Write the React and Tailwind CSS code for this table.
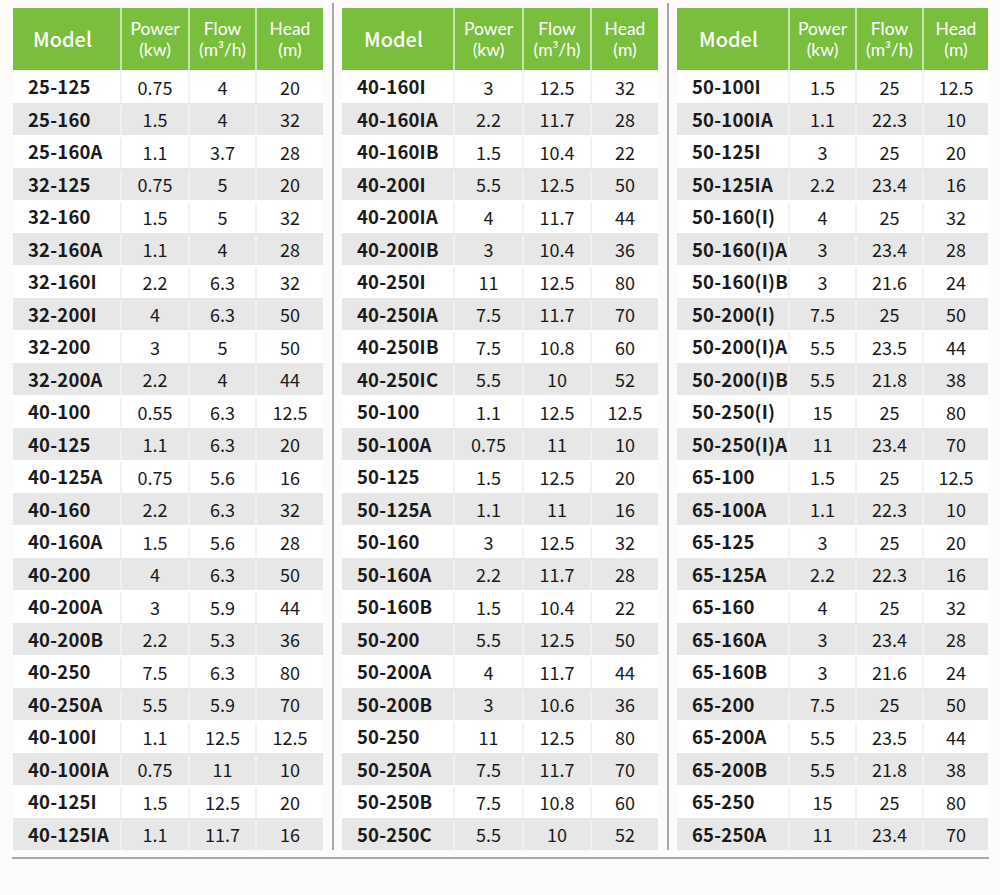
import React from "react";

const t1 = [
  ["25-125", "0.75", "4", "20"],
  ["25-160", "1.5", "4", "32"],
  ["25-160A", "1.1", "3.7", "28"],
  ["32-125", "0.75", "5", "20"],
  ["32-160", "1.5", "5", "32"],
  ["32-160A", "1.1", "4", "28"],
  ["32-160I", "2.2", "6.3", "32"],
  ["32-200I", "4", "6.3", "50"],
  ["32-200", "3", "5", "50"],
  ["32-200A", "2.2", "4", "44"],
  ["40-100", "0.55", "6.3", "12.5"],
  ["40-125", "1.1", "6.3", "20"],
  ["40-125A", "0.75", "5.6", "16"],
  ["40-160", "2.2", "6.3", "32"],
  ["40-160A", "1.5", "5.6", "28"],
  ["40-200", "4", "6.3", "50"],
  ["40-200A", "3", "5.9", "44"],
  ["40-200B", "2.2", "5.3", "36"],
  ["40-250", "7.5", "6.3", "80"],
  ["40-250A", "5.5", "5.9", "70"],
  ["40-100I", "1.1", "12.5", "12.5"],
  ["40-100IA", "0.75", "11", "10"],
  ["40-125I", "1.5", "12.5", "20"],
  ["40-125IA", "1.1", "11.7", "16"],
];

const t2 = [
  ["40-160I", "3", "12.5", "32"],
  ["40-160IA", "2.2", "11.7", "28"],
  ["40-160IB", "1.5", "10.4", "22"],
  ["40-200I", "5.5", "12.5", "50"],
  ["40-200IA", "4", "11.7", "44"],
  ["40-200IB", "3", "10.4", "36"],
  ["40-250I", "11", "12.5", "80"],
  ["40-250IA", "7.5", "11.7", "70"],
  ["40-250IB", "7.5", "10.8", "60"],
  ["40-250IC", "5.5", "10", "52"],
  ["50-100", "1.1", "12.5", "12.5"],
  ["50-100A", "0.75", "11", "10"],
  ["50-125", "1.5", "12.5", "20"],
  ["50-125A", "1.1", "11", "16"],
  ["50-160", "3", "12.5", "32"],
  ["50-160A", "2.2", "11.7", "28"],
  ["50-160B", "1.5", "10.4", "22"],
  ["50-200", "5.5", "12.5", "50"],
  ["50-200A", "4", "11.7", "44"],
  ["50-200B", "3", "10.6", "36"],
  ["50-250", "11", "12.5", "80"],
  ["50-250A", "7.5", "11.7", "70"],
  ["50-250B", "7.5", "10.8", "60"],
  ["50-250C", "5.5", "10", "52"],
];

const t3 = [
  ["50-100I", "1.5", "25", "12.5"],
  ["50-100IA", "1.1", "22.3", "10"],
  ["50-125I", "3", "25", "20"],
  ["50-125IA", "2.2", "23.4", "16"],
  ["50-160(I)", "4", "25", "32"],
  ["50-160(I)A", "3", "23.4", "28"],
  ["50-160(I)B", "3", "21.6", "24"],
  ["50-200(I)", "7.5", "25", "50"],
  ["50-200(I)A", "5.5", "23.5", "44"],
  ["50-200(I)B", "5.5", "21.8", "38"],
  ["50-250(I)", "15", "25", "80"],
  ["50-250(I)A", "11", "23.4", "70"],
  ["65-100", "1.5", "25", "12.5"],
  ["65-100A", "1.1", "22.3", "10"],
  ["65-125", "3", "25", "20"],
  ["65-125A", "2.2", "22.3", "16"],
  ["65-160", "4", "25", "32"],
  ["65-160A", "3", "23.4", "28"],
  ["65-160B", "3", "21.6", "24"],
  ["65-200", "7.5", "25", "50"],
  ["65-200A", "5.5", "23.5", "44"],
  ["65-200B", "5.5", "21.8", "38"],
  ["65-250", "15", "25", "80"],
  ["65-250A", "11", "23.4", "70"],
];

const headFont = { fontFamily: 'Lato, "Noto Sans", sans-serif' };

function HeadCell({ w, top, bottom, last }) {
  return (
    <div
      className={`${w} flex items-center justify-center text-center bg-[#79be3c] ${
        last ? "" : "border-r-2 border-[#c6e4ab]"
      } text-[17.5px] leading-[21px]`}
      style={headFont}
    >
      <p>
        {top}
        <br />
        {bottom}
      </p>
    </div>
  );
}

function Table({ rows, cols }) {
  const [cm, cp, cf, ch] = cols;
  return (
    <div className="flex flex-col">
      <div className="flex h-[62px] text-white">
        <div className={`${cm} flex items-center justify-center bg-[#79be3c] border-r-2 border-[#c6e4ab] text-[20px] font-medium pr-[8px]`}>
          Model
        </div>
        <HeadCell w={cp} top="Power" bottom="(kw)" />
        <HeadCell w={cf} top="Flow" bottom="(m³/h)" />
        <HeadCell w={ch} top="Head" bottom="(m)" last />
      </div>
      {rows.map((r, i) => (
        <div
          key={r[0]}
          className={`flex h-[32.5px] pt-[2px] text-[18px] text-[#1a1a1a] ${
            i % 2 === 0 ? "bg-white" : "bg-[#e7e7e7]"
          }`}
        >
          <div className={`${cm} flex items-center whitespace-nowrap pl-[15px] font-bold text-[18.5px] tracking-[0.2px] border-r-2 border-[#f1f1f1]`}>
            {r[0]}
          </div>
          <div className={`${cp} flex items-center justify-center border-r-2 border-[#f1f1f1]`}>
            {r[1]}
          </div>
          <div className={`${cf} flex items-center justify-center border-r-2 border-[#f1f1f1]`}>
            {r[2]}
          </div>
          <div className={`${ch} flex items-center justify-center`}>{r[3]}</div>
        </div>
      ))}
    </div>
  );
}

function Divider() {
  return (
    <div className="w-[19px] flex justify-center -mt-[5px]">
      <div className="w-[2px] bg-[#a8a8a8]" />
    </div>
  );
}

export default function App() {
  return (
    <div
      className="w-[1000px] h-[895px] bg-[#fdfafa] pt-[8px] pl-[12px]"
      style={{ fontFamily: '"Noto Sans CJK SC", "Noto Sans", sans-serif' }}
    >
      <div className="flex w-[977px] border-b-2 border-[#a8a8a8] pb-[7px] pl-[1px]">
        <Table rows={t1} cols={["w-[109px]", "w-[68px]", "w-[67px]", "w-[66px]"]} />
        <Divider />
        <Table rows={t2} cols={["w-[113px]", "w-[69px]", "w-[68px]", "w-[66px]"]} />
        <Divider />
        <Table rows={t3} cols={["w-[113px]", "w-[67px]", "w-[67px]", "w-[64px]"]} />
      </div>
    </div>
  );
}
